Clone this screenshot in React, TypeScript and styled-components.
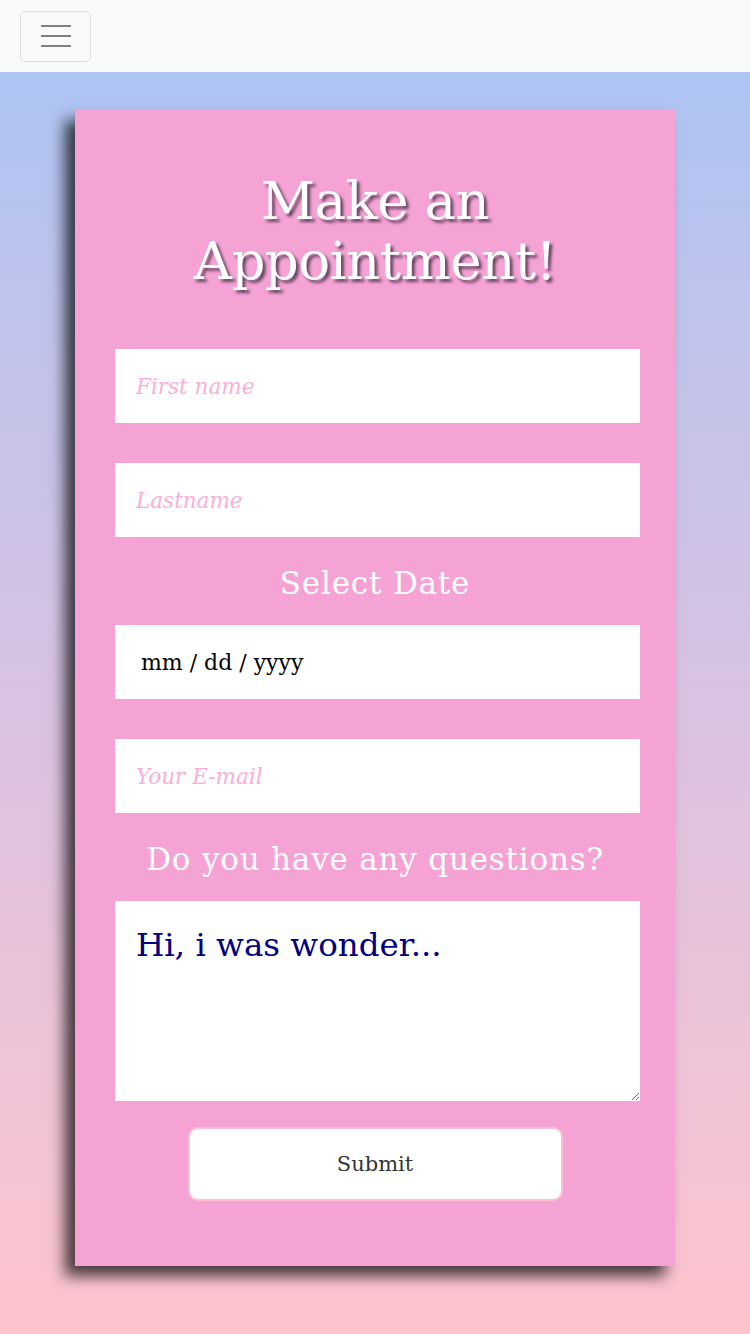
import React from "react";
import styled, { createGlobalStyle } from "styled-components";

const Global = createGlobalStyle`
  html, body { margin: 0; padding: 0; }
  body {
    font-family: "DejaVu Serif", "Liberation Serif", serif;
    background: #fec4ce;
  }
  * { box-sizing: border-box; }
`;

const Page = styled.div`
  width: 750px;
  min-height: 1334px;
  display: flex;
  flex-direction: column;
`;

const NavBar = styled.nav`
  height: 72px;
  background: #f8f9fa;
  display: flex;
  align-items: center;
  padding-left: 20px;
`;

const Toggler = styled.button`
  width: 71px;
  height: 51px;
  border: 1px solid rgba(0, 0, 0, 0.1);
  border-radius: 5px;
  background: transparent;
  display: flex;
  align-items: center;
  justify-content: center;
  padding: 0;
`;

const Main = styled.main`
  flex: 1;
  background: linear-gradient(to bottom, #aec4f3 0%, #d9c2e2 50%, #fec4cd 100%);
  padding: 38px 0 68px;
  display: flex;
  justify-content: center;
  align-items: flex-start;
`;

const Card = styled.form`
  width: 600px;
  background: #f5a2d5;
  box-shadow: -10px 10px 14px rgba(0, 0, 0, 0.72);
  padding: 61px 40px 65px;
  display: flex;
  flex-direction: column;
  align-items: stretch;
`;

const Title = styled.h1`
  margin: 0 0 58px;
  font-family: "DejaVu Serif", serif;
  font-weight: 400;
  font-size: 53px;
  line-height: 60px;
  color: #ffffff;
  text-align: center;
  letter-spacing: -0.5px;
  text-shadow: 3px 3px 3px rgba(60, 40, 60, 0.75);
`;

const Field = styled.input<{ $gapTop?: number }>`
  height: 74px;
  width: calc(100% + 5px);
  border: none;
  outline: none;
  background: #ffffff;
  padding: 0 21px;
  margin-top: ${(p) => p.$gapTop ?? 0}px;
  font-family: "DejaVu Serif", serif;
  font-size: 21.5px;
  color: #000;
  &::placeholder {
    color: #fcaed6;
    font-style: italic;
  }
`;

const DateField = styled(Field)`
  padding-left: 26px;
  font-size: 22px;
  color: #000;
`;

const Label = styled.div`
  margin: 26px 0 22px;
  height: 40px;
  font-family: "DejaVu Serif", serif;
  font-size: 31px;
  letter-spacing: 0.8px;
  line-height: 40px;
  color: #ffffff;
  text-align: center;
  white-space: nowrap;
`;

const Question = styled.textarea`
  height: 200px;
  width: calc(100% + 5px);
  border: none;
  outline: none;
  background: #ffffff;
  padding: 24px 21px;
  font-family: "DejaVu Serif", serif;
  font-size: 32.5px;
  line-height: 40px;
  color: #000080;
  resize: both;
  &::placeholder {
    color: #000080;
    opacity: 1;
  }
`;

const Submit = styled.button`
  align-self: center;
  margin-top: 26px;
  width: 375px;
  height: 74px;
  background: #ffffff;
  border: 2px solid #fdc0d2;
  border-radius: 10px;
  font-family: "DejaVu Serif", serif;
  font-size: 21px;
  color: #333333;
`;

const HamburgerIcon = () => (
  <svg width="30" height="31" viewBox="0 0 30 31">
    <path
      d="M0 5h30M0 15h30M0 25h30"
      stroke="#808080"
      strokeWidth="2"
      strokeLinecap="butt"
    />
  </svg>
);

export default function App() {
  return (
    <>
      <Global />
      <Page>
        <NavBar>
          <Toggler type="button" aria-label="Toggle navigation">
            <HamburgerIcon />
          </Toggler>
        </NavBar>
        <Main>
          <Card onSubmit={(e) => e.preventDefault()}>
            <Title>
              Make an
              <br />
              Appointment!
            </Title>
            <Field placeholder="First name" />
            <Field placeholder="Lastname" $gapTop={40} />
            <Label>Select Date</Label>
            <DateField defaultValue="mm / dd / yyyy" readOnly />
            <Field placeholder="Your E-mail" $gapTop={40} />
            <Label>Do you have any questions?</Label>
            <Question placeholder="Hi, i was wonder..." />
            <Submit type="submit">Submit</Submit>
          </Card>
        </Main>
      </Page>
    </>
  );
}
